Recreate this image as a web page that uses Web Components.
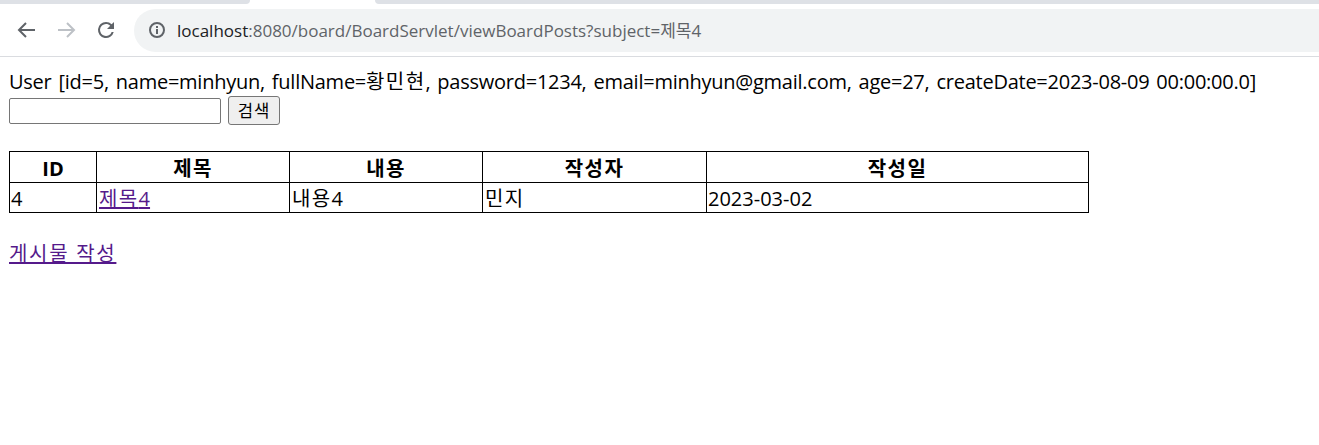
<!DOCTYPE html>
<html lang="ko">
<head>
<meta charset="utf-8">
<title>게시물</title>
<style>
  html, body { margin: 0; padding: 0; background: #fff; }
  body { font-family: "Open Sans", "Noto Sans CJK KR", sans-serif; font-size: 20px; color: #000; overflow: hidden; }
  .ko { letter-spacing: 1.4px; }
</style>
</head>
<body>
<browser-bar url-host="localhost" url-rest=":8080/board/BoardServlet/viewBoardPosts?subject=제목4"></browser-bar>
<board-page>
  <user-info>User [id=5, name=minhyun, fullName=<span class="ko">황민현</span>, password=1234, email=minhyun@gmail.com, age=27, createDate=2023-08-09 00:00:00.0]</user-info>
  <search-form label="검색"></search-form>
  <board-table></board-table>
  <write-link>게시물 작성</write-link>
</board-page>

<script>
class BrowserBar extends HTMLElement {
  constructor() {
    super();
    this.attachShadow({ mode: "open" });
  }

  connectedCallback() {
    this.shadowRoot.innerHTML = `
    <style>
      :host { display: block; height: 57px; background: #fff; border-bottom: 1px solid #dadce0; box-sizing: border-box; }
      .tabs { display: flex; height: 4px; }
      .strip { background: #dee1e6; }
      .before { width: 250px; border-radius: 0 0 9px 0; }
      .after { flex: 1; margin-left: 125px; border-radius: 0 0 0 9px; }
      .tools { display: flex; align-items: center; height: 52px; }
      .tools svg.nav { width: 24px; height: 24px; margin-left: 14px; fill: none; flex: none; }
      .tools svg.nav + svg.nav { margin-left: 16px; }
      .omni { display: flex; align-items: center; flex: 1; height: 43px; margin-left: 16px; border-radius: 22px 0 0 22px; background: #f1f3f4; font: 17px "Open Sans", "Noto Sans CJK KR", sans-serif; color: #5f6368; white-space: nowrap; }
      .omni svg { width: 20px; height: 20px; margin-left: 13px; margin-right: 10px; flex: none; }
      .omni span { padding-bottom: 2px; }
      .omni b { font-weight: 400; color: #202124; }
    </style>
    <div class="tabs"><div class="strip before"></div><div class="strip after"></div></div>
    <div class="tools">
      <svg class="nav" viewBox="0 0 24 24"><path d="M21 12H5M12 5l-7 7 7 7" stroke="#5f6368" stroke-width="2"/></svg>
      <svg class="nav" viewBox="0 0 24 24"><path d="M4 12h16M13 5l7 7-7 7" stroke="#bdc1c6" stroke-width="2"/></svg>
      <svg class="nav" viewBox="0 0 24 24"><path d="M17.65 6.35A7.96 7.96 0 0 0 12 4a8 8 0 1 0 7.73 10h-2.08A6 6 0 1 1 12 6c1.66 0 3.14.69 4.22 1.78L13 11h7V4l-2.35 2.35z" fill="#5f6368"/></svg>
      <div class="omni">
        <svg viewBox="0 0 20 20"><circle cx="10" cy="10" r="7" fill="none" stroke="#5f6368" stroke-width="2"/><path d="M10 9v5M10 6v2" stroke="#5f6368" stroke-width="2"/></svg>
        <span><b>${this.getAttribute("url-host")}</b>${this.getAttribute("url-rest")}</span>
      </div>
    </div>
    `;
  }
}

class BoardPage extends HTMLElement {
  constructor() {
    super();
    this.attachShadow({ mode: "open" }).innerHTML = `
    <style>
      :host { display: block; padding: 12px 0 0 9px; }
    </style>
    <slot></slot>
    `;
  }
}

class UserInfo extends HTMLElement {
  constructor() {
    super();
    this.attachShadow({ mode: "open" }).innerHTML = `
    <style>
      :host { display: block; height: 26px; line-height: 26px; white-space: nowrap; word-spacing: 2px; letter-spacing: -0.25px; }
    </style>
    <slot></slot>
    `;
  }
}

class SearchForm extends HTMLElement {
  constructor() {
    super();
    this.attachShadow({ mode: "open" });
  }

  connectedCallback() {
    this.shadowRoot.innerHTML = `
    <style>
      :host { display: flex; align-items: center; gap: 7px; height: 30px; padding-top: 1px; box-sizing: border-box; }
      input { box-sizing: border-box; width: 212px; height: 26px; margin: 0; padding: 1px 2px; border: 1px solid #767676; border-radius: 2px; background: #fff; }
      button { box-sizing: border-box; width: 52px; height: 29px; margin: 0; padding: 0 0 2px; border: 1px solid #767676; border-radius: 3px; background: #efefef; color: #000; font: 16.67px "Open Sans", "Noto Sans CJK KR", sans-serif; letter-spacing: 1px; }
    </style>
    <input type="text">
    <button>${this.getAttribute("label")}</button>
    `;
  }
}

class BoardTable extends HTMLElement {
  constructor() {
    super();
    this.attachShadow({ mode: "open" });
  }

  connectedCallback() {
    this.shadowRoot.innerHTML = `
    <style>
      :host { display: block; margin-top: 26px; }
      table { border-collapse: collapse; table-layout: fixed; width: 1079px; font-size: 20px; }
      th, td { border: 1px solid #000; padding: 1px; }
      th { height: 31px; box-sizing: border-box; padding-top: 4px; padding-bottom: 0; line-height: 24px; font-weight: 700; text-align: center; }
      td { padding-top: 3px; padding-bottom: 0; line-height: 26px; text-align: left; }
      td:nth-child(2), td:nth-child(3), td:nth-child(4) { padding-left: 2px; }
      a { color: #551a8b; }
      .ko { letter-spacing: 1.4px; }
    </style>
    <table>
      <colgroup><col style="width:87px"><col style="width:193px"><col style="width:193px"><col style="width:224px"><col style="width:382px"></colgroup>
      <tr><th>ID</th><th class="ko">제목</th><th class="ko">내용</th><th class="ko">작성자</th><th class="ko">작성일</th></tr>
      <tr><td>4</td><td><a href="#"><span class="ko">제목</span>4</a></td><td><span class="ko">내용</span>4</td><td class="ko">민지</td><td>2023-03-02</td></tr>
    </table>
    `;
  }
}

class WriteLink extends HTMLElement {
  constructor() {
    super();
    this.attachShadow({ mode: "open" }).innerHTML = `
    <style>
      :host { display: block; margin-top: 28px; line-height: 26px; letter-spacing: 1.7px; }
      a { color: #551a8b; }
    </style>
    <a href="#"><slot></slot></a>
    `;
  }
}

customElements.define("browser-bar", BrowserBar);
customElements.define("board-page", BoardPage);
customElements.define("user-info", UserInfo);
customElements.define("search-form", SearchForm);
customElements.define("board-table", BoardTable);
customElements.define("write-link", WriteLink);
</script>
</body>
</html>
